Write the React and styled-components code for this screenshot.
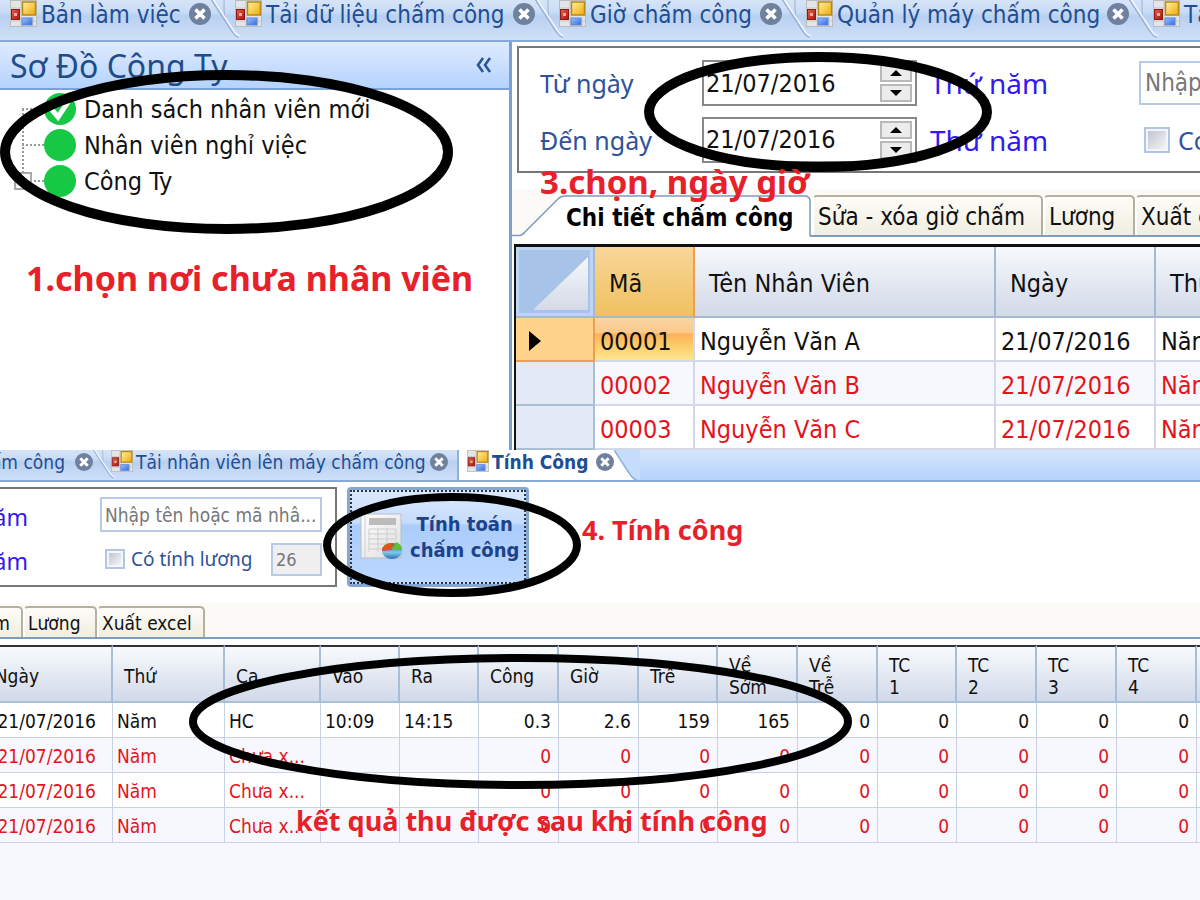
import React from 'react';
import styled, { createGlobalStyle, css } from 'styled-components';

const GlobalStyle = createGlobalStyle`
  * {
    box-sizing: border-box;
  }
  body {
    margin: 0;
    background: #fff;
    color: #111;
    font-family: 'DejaVu Sans Condensed', 'Noto Sans', sans-serif;
  }
  button, input {
    font-family: inherit;
  }
`;

const topTabs = [
  { label: 'Bản làm việc', width: 225 },
  { label: 'Tải dữ liệu chấm công', width: 324 },
  { label: 'Giờ chấm công', width: 247 },
  { label: 'Quản lý máy chấm công', width: 347 },
  { label: 'Tải nhân viên', width: 324 },
];

const employees = [
  { id: '00001', name: 'Nguyễn Văn A' },
  { id: '00002', name: 'Nguyễn Văn B' },
  { id: '00003', name: 'Nguyễn Văn C' },
];

const resultColumns = [
  { label: 'Ngày', width: 113 },
  { label: 'Thứ', width: 112 },
  { label: 'Ca', width: 96 },
  { label: 'Vào', width: 79 },
  { label: 'Ra', width: 79 },
  { label: 'Công', width: 80 },
  { label: 'Giờ', width: 80 },
  { label: 'Trễ', width: 79 },
  { label: 'Về Sớm', width: 80 },
  { label: 'Về Trễ', width: 80 },
  { label: 'TC 1', width: 79 },
  { label: 'TC 2', width: 80 },
  { label: 'TC 3', width: 80 },
  { label: 'TC 4', width: 80 },
];

const emptyResult = ['Chưa x...', '', '', '0', '0', '0', '0', '0', '0', '0', '0', '0'];
const results = [
  ['HC', '10:09', '14:15', '0.3', '2.6', '159', '165', '0', '0', '0', '0', '0'],
  emptyResult,
  emptyResult,
  emptyResult,
];

// icons
const FormIcon = ({ size }) => (
  <svg width={size} height={size} viewBox='0 0 27 27' aria-hidden='true'>
    <defs>
      <linearGradient id='formYellow' x1='0' y1='0' x2='1' y2='1'>
        <stop offset='0' stopColor='#fff2a0' />
        <stop offset='1' stopColor='#efa908' />
      </linearGradient>
      <linearGradient id='formRed' x1='0' y1='0' x2='1' y2='1'>
        <stop offset='0' stopColor='#e5604a' />
        <stop offset='1' stopColor='#a81410' />
      </linearGradient>
      <linearGradient id='formBlue' x1='0' y1='0' x2='1' y2='1'>
        <stop offset='0' stopColor='#9cc2ff' />
        <stop offset='1' stopColor='#2f6be0' />
      </linearGradient>
    </defs>
    <rect x='.5' y='.5' width='26' height='26' fill='#e2e5ea' stroke='#bdbcb8' />
    <path d='M1 8h11M11 1v25M23 17v9M1 21h25' stroke='#c9c7c2' fill='none' />
    <rect x='12.5' y='2' width='13' height='13' fill='url(#formYellow)' stroke='#b78918' strokeWidth='1.5' />
    <rect x='1.500' y='9.500' width='8' height='10' fill='url(#formRed)' stroke='#8c1a14' />
    <rect x='4' y='13' width='3' height='3' fill='#f4a79a' />
    <rect x='12' y='18' width='10' height='7' fill='url(#formBlue)' stroke='#5a86d6' />
  </svg>
);

const CloseIcon = ({ size }) => (
  <svg width={size} height={size} viewBox='0 0 22 22' aria-hidden='true'>
    <circle cx='11' cy='11' r='11' fill='#6f819f' />
    <path d='M6.500 6.500l9 9M15.500 6.500l-9 9' stroke='#fff' strokeWidth='3.6' />
  </svg>
);

const TabEdge = ({ scale = 1 }) => (
  <svg width={24 * scale} height={38 * scale} viewBox='0 0 24 38' overflow='visible' aria-hidden='true'>
    <path d='M13 0V9Q13 16 15 20' stroke='#9bb0d2' fill='none' />
    <path d='M0 -1L20 30Q24 37 28 37' stroke='#9bb0d2' strokeWidth='1.4' fill='none' />
    <path d='M2 -1L21 28Q25 35 29 36' stroke='#f4f8ff' strokeWidth='1.4' fill='none' />
  </svg>
);

const ReportIcon = () => (
  <svg width='44' height='48' viewBox='0 0 44 48' aria-hidden='true'>
    <defs>
      <linearGradient id='paper' x1='0' y1='0' x2='1' y2='1'>
        <stop offset='0' stopColor='#ffffff' />
        <stop offset='1' stopColor='#dddddd' />
      </linearGradient>
      <linearGradient id='pieBlue' x1='0' y1='0' x2='0' y2='1'>
        <stop offset='0' stopColor='#2d6ea8' />
        <stop offset='.6' stopColor='#79c8f2' />
        <stop offset='1' stopColor='#2d6ea8' />
      </linearGradient>
    </defs>
    <rect x='1' y='1' width='40' height='44' fill='url(#paper)' stroke='#b9bec8' />
    <path d='M5 2v42' stroke='#cfcfcf' />
    <rect x='9' y='5' width='27' height='7' fill='#bcbcbc' />
    <path d='M9 16h27M9 21h27M9 26h27M9 31h18M9 36h15M9 16v23M18 16v23M27 16v16M36 16v10' stroke='#cdcdcd' fill='none' />
    <ellipse cx='32' cy='38' rx='10' ry='8' fill='url(#pieBlue)' />
    <path d='M32 37L22 38Q22 30 33 30Z' fill='#e0531f' />
    <path d='M32 37L36 29Q42 31 42 37Z' fill='#5fbf3a' />
  </svg>
);

const ActiveTabShape = () => (
  <svg width='300' height='42' viewBox='0 0 300 42' aria-hidden='true'>
    <path d='M0 40.500H7Q11 40 13 37L46 4Q49 1 53 1H292Q298 1 298 6V42H0Z' fill='#fff' />
    <path d='M0 40.500H7Q11 40 13 37L46 4Q49 1 53 1H292Q298 1 298 6V41' fill='none' stroke='#7f9cc0' strokeWidth='1.500' />
  </svg>
);

const Ring = ({ width, height, stroke, x, y }) => (
  <RingBox $x={x} $y={y} width={width} height={height} aria-hidden='true'>
    <ellipse
      cx={width / 2}
      cy={height / 2}
      rx={(width - stroke) / 2}
      ry={(height - stroke) / 2}
      fill='none'
      stroke='#000'
      strokeWidth={stroke}
    />
  </RingBox>
);

const TopScreen = () => (
  <Screen>
    <TabStrip>
      {topTabs.map((tab) => (
        <WindowTab key={tab.label} $width={tab.width}>
          <FormIcon size={27} />
          <TabLabel>{tab.label}</TabLabel>
          <CloseButton aria-label='Đóng'>
            <CloseIcon size={22} />
          </CloseButton>
          <TabEdge />
        </WindowTab>
      ))}
    </TabStrip>
    <Split>
      <SidePane>
        <PaneHeader>
          Sơ Đồ Công Ty
          <Collapse aria-label='Thu gọn'>
            <svg width='16' height='16' viewBox='0 0 16 16'>
              <path d='M7 1L2 8l5 7M14 1L9 8l5 7' fill='none' stroke='#2b5797' strokeWidth='2.600' />
            </svg>
          </Collapse>
        </PaneHeader>
        <Tree>
          <TreeItem $first>
            <Branch />
            <Bullet>
              <svg width='32' height='32' viewBox='0 0 32 32'>
                <path d='M8 17l6 7L24 9' fill='none' stroke='#fff' strokeWidth='5' />
              </svg>
            </Bullet>
            Danh sách nhân viên mới
          </TreeItem>
          <TreeItem>
            <Branch />
            <Bullet />
            Nhân viên nghỉ việc
          </TreeItem>
          <TreeItem $last>
            <Branch>
              <Expander>+</Expander>
            </Branch>
            <Bullet />
            Công Ty
          </TreeItem>
        </Tree>
      </SidePane>
      <MainPane>
        <FilterBox>
          <FilterLabel htmlFor='from'>Từ ngày</FilterLabel>
          <DateField>
            <input id='from' defaultValue='21/07/2016' />
            <Spinner />
          </DateField>
          <DayName>Thứ năm</DayName>
          <SearchInput aria-label='Tìm nhân viên' placeholder='Nhập tên hoặc mã nhâ...' />
          <FilterLabel htmlFor='to'>Đến ngày</FilterLabel>
          <DateField>
            <input id='to' defaultValue='21/07/2016' />
            <Spinner />
          </DateField>
          <DayName>Thứ năm</DayName>
          <CheckLabel>
            <CheckBox type='checkbox' />
            Có tính lương
          </CheckLabel>
        </FilterBox>
        <PageTabs>
          <ActivePageTab>
            <ActiveTabShape />
            <span>Chi tiết chấm công</span>
          </ActivePageTab>
          <PageTab $width={231}>Sửa - xóa giờ chấm</PageTab>
          <PageTab $width={92}>Lương</PageTab>
          <PageTab $width={134}>Xuất excel</PageTab>
        </PageTabs>
        <EmployeeTable>
          <colgroup>
            <col width='79' />
            <col width='100' />
            <col width='301' />
            <col width='160' />
            <col />
          </colgroup>
          <thead>
            <tr>
              <CornerCell>
                <svg width='76' height='68' viewBox='0 0 76 68'>
                  <defs>
                    <linearGradient id='corner' x1='0' y1='0' x2='0' y2='1'>
                      <stop offset='0' stopColor='#f5f7fb' />
                      <stop offset='1' stopColor='#d5dae6' />
                    </linearGradient>
                  </defs>
                  <path d='M72 9V62H17Z' fill='url(#corner)' />
                </svg>
              </CornerCell>
              <HeadCell $selected>Mã</HeadCell>
              <HeadCell>Tên Nhân Viên</HeadCell>
              <HeadCell>Ngày</HeadCell>
              <HeadCell>Thứ</HeadCell>
            </tr>
          </thead>
          <tbody>
            {employees.map((employee, i) => (
              <EmployeeRow key={employee.id} $selected={i === 0} $odd={i % 2 === 1}>
                <RowMark $selected={i === 0}>
                  {i === 0 && (
                    <svg width='12' height='20' viewBox='0 0 12 20'>
                      <path d='M0 0L12 10L0 20Z' fill='#000' />
                    </svg>
                  )}
                </RowMark>
                <CodeCell $selected={i === 0}>{employee.id}</CodeCell>
                <td>{employee.name}</td>
                <td>21/07/2016</td>
                <td>Năm</td>
              </EmployeeRow>
            ))}
          </tbody>
        </EmployeeTable>
      </MainPane>
    </Split>
    <Ring x={0} y={70} width={453} height={164} stroke={10} />
    <Ring x={644} y={52} width={348} height={120} stroke={10} />
    <Note $x={26} $y={258} $size={34}>1.chọn nơi chưa nhân viên</Note>
    <Note $x={540} $y={162} $size={33}>3.chọn, ngày giờ</Note>
  </Screen>
);

const Spinner = () => (
  <SpinBox>
    <button aria-label='Tăng'>
      <svg width='12' height='6' viewBox='0 0 12 6'>
        <path d='M0 6L6 0L12 6Z' />
      </svg>
    </button>
    <button aria-label='Giảm'>
      <svg width='12' height='6' viewBox='0 0 12 6'>
        <path d='M0 0L6 6L12 0Z' />
      </svg>
    </button>
  </SpinBox>
);

const BottomScreen = () => (
  <Screen $fill>
    <TabStrip $small>
      <WindowTab $small $clipped $width={111}>
        <TabLabel>chấm công</TabLabel>
        <CloseButton aria-label='Đóng'>
          <CloseIcon size={18} />
        </CloseButton>
        <TabEdge scale={0.75} />
      </WindowTab>
      <WindowTab $small $width={346}>
        <FormIcon size={22} />
        <TabLabel>Tải nhân viên lên máy chấm công</TabLabel>
        <CloseButton aria-label='Đóng'>
          <CloseIcon size={18} />
        </CloseButton>
      </WindowTab>
      <ActiveWindowTab>
        <FormIcon size={22} />
        <TabLabel>Tính Công</TabLabel>
        <CloseButton aria-label='Đóng'>
          <CloseIcon size={18} />
        </CloseButton>
        <svg width='26' height='32' viewBox='0 0 26 32' aria-hidden='true'>
          <path d='M0 0L15 23Q20 31 26 31V32H0Z' fill='#fff' />
          <path d='M0 0L15 23Q20 31 26 31' fill='none' stroke='#8eaedb' strokeWidth='1.500' />
        </svg>
      </ActiveWindowTab>
      <StripRest />
    </TabStrip>
    <ActionRow>
      <ResultFilter>
        <ClippedDay>Thứ năm</ClippedDay>
        <SearchInput $small aria-label='Tìm theo tên hoặc mã' placeholder='Nhập tên hoặc mã nhâ...' />
        <ClippedDay>Thứ năm</ClippedDay>
        <SalaryRow>
          <CheckLabel $small>
            <CheckBox $small type='checkbox' />
            Có tính lương
          </CheckLabel>
          <DaysInput aria-label='Số ngày công' defaultValue='26' disabled />
        </SalaryRow>
      </ResultFilter>
      <CalcButton>
        <ReportIcon />
        <span>
          Tính toán
          <br />
          chấm công
        </span>
      </CalcButton>
    </ActionRow>
    <PageTabs $small>
      <PageTab $small $clipped $width={23}>chấm</PageTab>
      <PageTab $small $width={74}>Lương</PageTab>
      <PageTab $small $width={108}>Xuất excel</PageTab>
    </PageTabs>
    <ResultTable>
      <colgroup>
        {resultColumns.map((column) => (
          <col key={column.label} width={column.width} />
        ))}
        <col />
      </colgroup>
      <thead>
        <tr>
          {resultColumns.map((column, i) => (
            <ResultHead key={column.label} $clipped={i === 0}>
              <div>{column.label}</div>
            </ResultHead>
          ))}
          <ResultHead />
        </tr>
      </thead>
      <tbody>
        {results.map((cells, i) => (
          <ResultRow key={i} $missing={i > 0} $odd={i % 2 === 1}>
            <DateCell>
              <div>21/07/2016</div>
            </DateCell>
            <td>Năm</td>
            {cells.map((cell, j) => (
              <ResultCell key={j} $number={j > 2}>
                {cell}
              </ResultCell>
            ))}
            <td />
          </ResultRow>
        ))}
      </tbody>
    </ResultTable>
    <Ring x={323} y={43} width={258} height={104} stroke={8} />
    <Ring x={189} y={204} width={663} height={135} stroke={8} />
    <Note $x={582} $y={60} $size={27}>4. Tính công</Note>
    <Note $x={296} $y={351} $size={27}>kết quả thu được sau khi tính công</Note>
  </Screen>
);

const App = () => {
  return (
    <Page>
      <GlobalStyle />
      <TopScreen />
      <BottomScreen />
    </Page>
  );
};

const Page = styled.main`
  display: flex;
  flex-direction: column;
  min-height: 100vh;
  overflow: hidden;
`;

const Screen = styled.section`
  position: relative;
  overflow: hidden;
  background: ${({ $fill }) => ($fill ? '#f7f8fe' : '#fff')};
  flex: ${({ $fill }) => ($fill ? '1 0 auto' : '0 0 auto')};
`;

const RingBox = styled.svg`
  position: absolute;
  left: ${({ $x }) => $x}px;
  top: ${({ $y }) => $y}px;
  pointer-events: none;
`;

const Note = styled.p`
  position: absolute;
  left: ${({ $x }) => $x}px;
  top: ${({ $y }) => $y}px;
  margin: 0;
  color: #e8202a;
  font-size: ${({ $size }) => $size}px;
  line-height: 40px;
  font-weight: 700;
  font-family: 'Noto Sans', sans-serif;
  white-space: nowrap;
  pointer-events: none;
`;

const TabStrip = styled.div`
  display: flex;
  height: ${({ $small }) => ($small ? 32 : 42)}px;
  padding-left: ${({ $small }) => ($small ? 0 : 10)}px;
  border-bottom: 2px solid #86a9d8;
  background: linear-gradient(#d6e4f8 0, #c9dcf6 30%, #b8d0f1 40%, #cfe0f8 100%);
  overflow: hidden;
`;

const CloseButton = styled.button`
  display: flex;
  flex: none;
  margin: 0;
  padding: 0;
  border: 0;
  background: none;
`;

const TabLabel = styled.span`
  flex: 1;
  white-space: nowrap;
`;

const WindowTab = styled.div`
  display: flex;
  align-items: flex-start;
  flex: 0 0 ${({ $width }) => $width}px;
  min-width: 0;
  color: #1f4e94;
  font-size: ${({ $small }) => ($small ? 19 : 24)}px;
  line-height: ${({ $small }) => ($small ? 24 : 30)}px;
  > svg, > button {
    flex: none;
  }
  ${TabLabel} {
    min-width: 0;
    padding-left: ${({ $small }) => ($small ? 3 : 4)}px;
  }
  ${CloseButton} {
    padding-top: 3px;
    ${({ $small }) => $small && 'margin-right: 9px;'}
  }
  ${({ $clipped }) =>
    $clipped &&
    css`
      ${TabLabel} {
        display: flex;
        justify-content: flex-end;
        padding-right: 10px;
      }
      ${CloseButton} {
        margin-right: 0;
      }
    `}
`;

const ActiveWindowTab = styled.div`
  display: flex;
  align-items: flex-start;
  flex: none;
  width: 183px;
  margin-bottom: -2px;
  border-left: 2px solid #8eaedb;
  background: linear-gradient(90deg, #fff 156px, #c6dcfb 156px);
  padding-left: 8px;
  color: #1f4e94;
  font-size: 19px;
  font-weight: 700;
  line-height: 24px;
  > svg {
    flex: none;
  }
  ${TabLabel} {
    padding-left: 3px;
    min-width: 0;
  }
  ${CloseButton} {
    padding-top: 3px;
  }
`;

const StripRest = styled.div`
  flex: 1;
  background: linear-gradient(#d5e6fd, #b5d2fa);
`;

const Split = styled.div`
  display: flex;
  align-items: stretch;
`;

const SidePane = styled.aside`
  flex: 0 0 512px;
  border-right: 3px solid #7aa0d4;
`;

const PaneHeader = styled.header`
  display: flex;
  align-items: center;
  justify-content: space-between;
  height: 48px;
  padding: 0 17px 0 10px;
  border-bottom: 2px solid #7ba2d8;
  background: linear-gradient(#deebff, #b5d3fd);
  color: #204d89;
  font-size: 32px;
  font-family: 'Noto Sans', sans-serif;
`;

const Collapse = styled.button`
  display: flex;
  padding: 0;
  border: 0;
  background: none;
`;

const Tree = styled.ul`
  margin: 0;
  padding: 1px 0 0 22px;
  list-style: none;
`;

const Branch = styled.span`
  display: flex;
  align-items: center;
  width: 22px;
`;

const TreeItem = styled.li`
  display: flex;
  align-items: center;
  height: 36px;
  font-size: 25px;
  white-space: nowrap;
  ${Branch} {
    align-self: stretch;
    background:
      repeating-linear-gradient(90deg, #999 0 2px, transparent 2px 4px) 0 50% / 100% 2px no-repeat,
      repeating-linear-gradient(#999 0 2px, transparent 2px 4px) 0
        ${({ $first }) => ($first ? '100%' : '0')} / 2px
        ${({ $first, $last }) => ($first || $last ? '50%' : '100%')} no-repeat;
  }
`;

const Expander = styled.span`
  flex: none;
  width: 18px;
  height: 18px;
  margin-left: -8px;
  border: 2px solid #aaa;
  background: #fff;
  font-size: 16px;
  line-height: 14px;
  text-align: center;
`;

const Bullet = styled.span`
  display: flex;
  width: 32px;
  height: 32px;
  margin-right: 8px;
  border-radius: 50%;
  background: #17c845;
`;

const MainPane = styled.div`
  flex: 1;
  min-width: 0;
  overflow: hidden;
  background: #fff;
`;

const FilterBox = styled.div`
  display: grid;
  grid-template-columns: 162px 215px 222px 280px;
  row-gap: 10px;
  align-items: center;
  height: 127px;
  margin: 4px 0 0 5px;
  padding: 12px 0 8px 21px;
  border: 2px solid #777;
  border-right: 0;
  overflow: hidden;
`;

const FilterLabel = styled.label`
  color: #2f529a;
  font-size: 25px;
  font-family: 'Noto Sans', sans-serif;
  line-height: 30px;
`;

const DateField = styled.div`
  display: flex;
  align-items: center;
  height: 46px;
  border: 2px solid #888;
  padding-right: 3px;
  input {
    flex: 1;
    min-width: 0;
    padding: 0 0 0 2px;
    border: 0;
    color: #111;
    font-size: 25px;
    outline: 0;
  }
`;

const SpinBox = styled.div`
  display: flex;
  flex-direction: column;
  gap: 2px;
  width: 32px;
  button {
    display: flex;
    align-items: center;
    justify-content: center;
    height: 18px;
    padding: 0;
    border: 2px solid #b9b9b9;
    background: #ececec;
  }
`;

const DayName = styled.span`
  padding: 0 0 0 13px;
  color: #3418f0;
  font-size: 28px;
  font-family: 'Noto Sans', sans-serif;
  line-height: 32px;
`;

const SearchInput = styled.input`
  width: 100%;
  height: ${({ $small }) => ($small ? 35 : 44)}px;
  padding: 0 ${({ $small }) => ($small ? 3 : 4)}px;
  border: 2px solid #b7cae6;
  font-size: ${({ $small }) => ($small ? 19 : 24)}px;
  &::placeholder {
    color: #777;
    opacity: 1;
  }
`;

const CheckLabel = styled.label`
  display: flex;
  align-items: center;
  gap: ${({ $small }) => ($small ? 6 : 8)}px;
  padding-left: 5px;
  color: #2f529a;
  font-size: ${({ $small }) => ($small ? 19 : 25)}px;
  font-family: 'Noto Sans', sans-serif;
  white-space: nowrap;
`;

const CheckBox = styled.input`
  appearance: none;
  width: ${({ $small }) => ($small ? 20 : 26)}px;
  height: ${({ $small }) => ($small ? 20 : 26)}px;
  margin: 0;
  padding: 2px;
  border: 2px solid #b0c6e4;
  background: linear-gradient(135deg, #bfc6d0, #f4f5f7) content-box, #f4f6f9;
`;

const PageTabs = styled.div`
  display: flex;
  align-items: flex-end;
  height: ${({ $small }) => ($small ? 36 : 47)}px;
  margin-top: ${({ $small }) => ($small ? 0 : 17)}px;
  background: linear-gradient(#fbfaf6, #fbfaf6) 0 0 / 100% calc(100% - 2px) no-repeat #7f9cc0;
  overflow: hidden;
`;

const PageTab = styled.button`
  flex: 0 0 ${({ $width }) => $width}px;
  display: flex;
  align-items: center;
  justify-content: ${({ $clipped }) => ($clipped ? 'flex-end' : 'flex-start')};
  height: ${({ $small }) => ($small ? 31 : 40)}px;
  margin-bottom: 2px;
  padding: ${({ $clipped, $small }) => ($clipped ? '0 11px 0 0' : $small ? '0 3px' : '2px 4px 0')};
  border: 2px solid #b3b19f;
  border-bottom: 0;
  border-left: ${({ $clipped }) => ($clipped ? '0' : '2px solid #fff')};
  border-radius: ${({ $clipped }) => ($clipped ? '0 5px 0 0' : '5px 5px 0 0')};
  background: linear-gradient(#fdfcf8, #f0eee0);
  color: #111;
  font-size: ${({ $small }) => ($small ? 19 : 24)}px;
  white-space: nowrap;
  overflow: hidden;
`;

const ActivePageTab = styled.button`
  flex: 0 0 300px;
  display: grid;
  align-items: center;
  height: 42px;
  padding: 0;
  border: 0;
  background: none;
  color: #000;
  font-size: 24px;
  font-weight: 700;
  text-align: left;
  white-space: nowrap;
  > * {
    grid-area: 1 / 1;
  }
  span {
    padding: 3px 0 0 54px;
  }
`;

const EmployeeTable = styled.table`
  width: calc(100% - 2px);
  margin: 7px 0 0 2px;
  border-top: 3px solid #111;
  border-left: 2px solid #111;
  border-spacing: 0;
  table-layout: fixed;
  font-size: 25px;
  white-space: nowrap;
  th, td {
    overflow: hidden;
    border-right: 2px solid #d3d9e8;
    border-bottom: 2px solid #d3d9e8;
    line-height: 30px;
  }
  td {
    height: 44px;
    padding: 6px 0 0 5px;
  }
  th:last-child, td:last-child {
    border-right: 0;
  }
`;

const CornerCell = styled.td`
  && {
    height: 71px;
    padding: 0;
    border-color: #a3b9d4;
    background: #a8c3e8;
    box-shadow: inset 0 0 0 3px #bdd4f3;
    line-height: 0;
  }
`;

const HeadCell = styled.th`
  && {
    height: 71px;
    padding: 5px 0 0 14px;
    border-color: ${({ $selected }) => ($selected ? '#ee9d52' : '#a5bad2')};
    border-bottom-color: #a5bad2;
    background: ${({ $selected }) =>
      $selected ? 'linear-gradient(#f8d698, #f0c160)' : 'linear-gradient(#f7fafd, #e5eaf3 45%, #d3dae8)'};
    font-size: 25px;
    font-weight: 400;
    text-align: left;
  }
`;

const EmployeeRow = styled.tr`
  color: ${({ $selected }) => ($selected ? '#111' : '#e3141c')};
  background: ${({ $odd }) => ($odd ? '#f7f8fe' : '#fff')};
`;

const RowMark = styled.td`
  && {
    padding: 4px 0 0 13px;
    border-color: ${({ $selected }) => ($selected ? '#ee9d52' : '#a9bfd2')};
    background: ${({ $selected }) => ($selected ? '#ffd389' : '#e4eaf5')};
    line-height: 0;
  }
`;

const CodeCell = styled.td`
  ${({ $selected }) =>
    $selected &&
    css`
      background: linear-gradient(#f9d4a4, #fbc98c 35%, #fdb157 38%, #fdcb6a 65%, #ffe68f);
    `}
`;

// lower screen
const ActionRow = styled.div`
  display: flex;
  align-items: flex-start;
  gap: 10px;
  padding: 5px 0 16px;
  background: #fff;
`;

const ResultFilter = styled.div`
  display: grid;
  grid-template-columns: 100px 222px;
  row-gap: 10px;
  align-items: center;
  height: 100px;
  width: 337px;
  padding-top: 8px;
  padding-bottom: 9px;
  border: 2px solid #777;
  border-left: 0;
`;

const ClippedDay = styled.span`
  display: flex;
  justify-content: flex-end;
  width: 28px;
  padding-top: 4px;
  overflow: hidden;
  color: #3418f0;
  font-size: 23px;
  font-family: 'Noto Sans', sans-serif;
  line-height: 28px;
  white-space: nowrap;
`;

const SalaryRow = styled.div`
  display: flex;
  align-items: center;
  justify-content: space-between;
`;

const DaysInput = styled.input`
  width: 51px;
  height: 33px;
  padding: 0 3px;
  border: 2px solid #b7cae6;
  background: #efefef;
  color: #777;
  font-size: 18px;
`;

const CalcButton = styled.button`
  display: flex;
  align-items: center;
  gap: 6px;
  width: 182px;
  height: 100px;
  padding: 0 3px 0 10px;
  border: 3px solid #86a7d3;
  border-radius: 4px;
  background: linear-gradient(#dce9fd, #c6dcfc 35%, #abccfb 38%, #bcd8ff);
  color: #1c4389;
  font-size: 20px;
  font-weight: 700;
  line-height: 26px;
  white-space: nowrap;
  outline: 2px dotted #333;
  outline-offset: -5px;
  svg {
    flex: none;
  }
`;

const ResultTable = styled.table`
  width: 100%;
  border-top: 6px solid #fff;
  border-spacing: 0;
  table-layout: fixed;
  font-size: 19px;
  white-space: nowrap;
  th, td {
    height: 35px;
    padding: 2px 0 0 4px;
    border-right: 1px solid #c9d2e4;
    border-bottom: 1px solid #c9d2e4;
    line-height: 22px;
    overflow: hidden;
  }
`;

const ResultHead = styled.th`
  && {
    height: 58px;
    padding: 3px 32px 0 11px;
    border-top: 2px solid #333;
    border-right: 2px solid #a9bdd6;
    border-bottom: 2px solid #a9c0d6;
    background: linear-gradient(#f8fbfd, #e6ebf4 45%, #d2d9e8);
    font-size: 19px;
    font-weight: 400;
    text-align: left;
    white-space: normal;
    ${({ $clipped }) => $clipped && 'padding: 3px 72px 0 0;'}
  }
  &&:last-child {
    padding: 0;
    border-right: 0;
  }
  div {
    ${({ $clipped }) => $clipped && 'display: flex; justify-content: flex-end; white-space: nowrap;'}
  }
`;

const ResultRow = styled.tr`
  color: ${({ $missing }) => ($missing ? '#e3141c' : '#111')};
  background: ${({ $odd }) => ($odd ? '#f7f8fe' : '#fff')};
  td:last-child {
    padding: 0;
    border-right: 0;
  }
`;

const DateCell = styled.td`
  && {
    padding: 2px 16px 0 0;
  }
  div {
    display: flex;
    justify-content: flex-end;
  }
`;

const ResultCell = styled.td`
  && {
    padding-right: ${({ $number }) => ($number ? 7 : 0)}px;
  }
  text-align: ${({ $number }) => ($number ? 'right' : 'left')};
`;

export default App;
